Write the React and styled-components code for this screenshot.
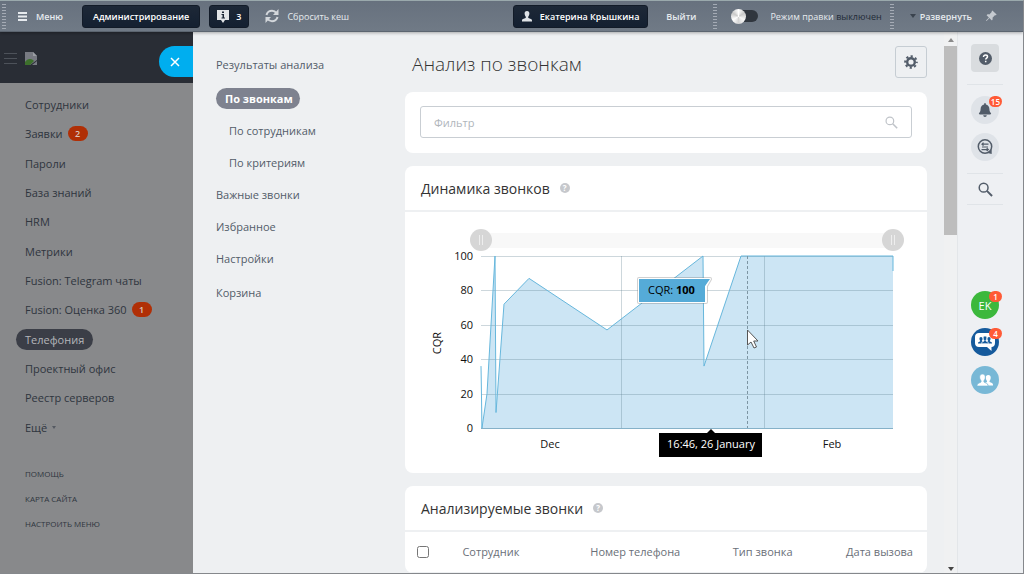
import React from 'react';
import styled, { createGlobalStyle, css } from 'styled-components';
import { FaBell } from 'react-icons/fa';
import { BsPinAngleFill } from 'react-icons/bs';

const GlobalStyle = createGlobalStyle`
  * {
    box-sizing: border-box;
  }
  body {
    margin: 0;
    background: #eef0f2;
    font-family: "Open Sans", "Noto Sans", sans-serif;
    font-size: 11px;
    color: #525c69;
  }
  button, input {
    font-family: inherit;
    margin: 0;
  }
  button {
    border: 0;
    padding: 0;
    background: none;
    color: inherit;
    cursor: pointer;
  }
  a {
    color: inherit;
    text-decoration: none;
  }
  ul {
    list-style: none;
    margin: 0;
    padding: 0;
  }
  svg {
    display: block;
    flex-shrink: 0;
  }
`;

const Page = styled.div`
  display: flex;
  flex-direction: column;
  height: 100vh;
  overflow: hidden;
  border: 1px solid #85888c;
  border-top-color: #9aa9ac;
  border-left: 0;
`;

/* top bar */

const TopBar = styled.header`
  display: flex;
  align-items: center;
  flex: none;
  height: 31px;
  padding-right: 26px;
  color: #e6eaee;
  background: linear-gradient(#67717e, #707a86);
  border-bottom: 1px solid #5c6570;
  box-shadow: 0 1px 3px rgba(0, 0, 0, 0.3);
  white-space: nowrap;
  z-index: 2;
`;

const Grip = styled.span`
  width: 4px;
  height: 26px;
  margin-left: ${(p) => p.$left || 0}px;
  background: radial-gradient(#a9b0b9 35%, transparent 40%) 0 0 / 2px 3px;
`;

const BarButton = styled.button`
  display: flex;
  align-items: center;
  gap: ${(p) => p.$gap || 8}px;
  margin-left: ${(p) => p.$left || 0}px;
  font-size: 9px;
  font-weight: ${(p) => (p.$plain ? 400 : 600)};
  ${(p) =>
    p.$dark &&
    css`
      height: 23px;
      padding: 0 ${p.$pad || 10}px;
      border-radius: 3px;
      color: #fff;
      background: linear-gradient(#1d2837, #142031);
      border: 1px solid #121b28;
    `}
`;

const Spacer = styled.span`
  flex: 1;
`;

const Toggle = styled.label`
  display: flex;
  align-items: center;
  gap: 12px;
  margin-left: 17px;
  font-size: 9px;
  b {
    font-weight: 400;
    color: #222b37;
  }
  input {
    display: flex;
    align-items: center;
    appearance: none;
    width: 24px;
    height: 12px;
    border-radius: 6px;
    background: #30363e;
  }
  input::before {
    content: "";
    flex: none;
    width: 15px;
    height: 15px;
    margin-left: -3px;
    border-radius: 50%;
    background: conic-gradient(#fff, #c9c9c9, #f8f8f8, #d5d5d5, #fff, #c9c9c9, #fff);
  }
`;

/* left menu */

const Body = styled.div`
  display: flex;
  flex: 1;
  min-height: 0;
`;

const LeftMenu = styled.nav`
  flex: none;
  width: 193px;
  background: #88898b;
  color: #2f353e;
`;

const LeftHead = styled.div`
  display: flex;
  align-items: center;
  gap: 7px;
  height: 51px;
  padding: 2px 0 0 4px;
  background: #292d35;
  color: #4d525a;
`;

const CloseButton = styled.button`
  display: flex;
  align-items: center;
  margin-left: auto;
  width: 34px;
  height: 31px;
  padding-left: 11px;
  margin-top: 6px;
  border-radius: 16px 0 0 16px;
  background: #00aeef;
  color: #fff;
`;

const LeftList = styled.ul`
  display: grid;
  grid-auto-rows: 1fr;
  align-items: center;
  justify-items: start;
  height: 352px;
  margin: 7px 0 25px 16px;
`;

const LeftLink = styled.a`
  display: flex;
  align-items: center;
  gap: 5px;
  height: 21px;
  padding: 0 9px;
  border-radius: 11px;
  ${(p) =>
    p.$active &&
    css`
      background: #3b3e47;
      color: #b4b6ba;
    `}
`;

const MenuCount = styled.span`
  min-width: 20px;
  height: 15px;
  border-radius: 8px;
  background: #b02f06;
  color: #d9c5be;
  font-size: 9px;
  font-weight: 600;
  line-height: 15px;
  text-align: center;
`;

const LeftFooter = styled.ul`
  display: grid;
  gap: 11px;
  padding-left: 25px;
  font-size: 8px;
  line-height: 14px;
  text-transform: uppercase;
`;

/* panel */

const Panel = styled.div`
  display: flex;
  flex: 1;
  min-width: 0;
  background: #eef0f2;
`;

const PanelNav = styled.ul`
  display: flex;
  flex-direction: column;
  align-items: flex-start;
  gap: 11px;
  flex: none;
  width: 212px;
  padding: 22px 0 0 23px;
`;

const PanelLink = styled.a`
  display: block;
  line-height: 21px;
  padding-left: ${(p) => (p.$nested ? 13 : 0)}px;
  margin-top: ${(p) => p.$top || 0}px;
  ${(p) =>
    p.$active &&
    css`
      padding: 0 7px 0 9px;
      border-radius: 11px;
      background: #7e828f;
      color: #fff;
      font-weight: 700;
    `}
`;

const Main = styled.main`
  flex: 1;
  min-width: 0;
  overflow: hidden;
  padding-right: 17px;
`;

const TitleRow = styled.div`
  display: flex;
  align-items: center;
  justify-content: space-between;
  height: 60px;
  padding-left: 7px;
`;

const Title = styled.h1`
  margin: 3px 0 0;
  font-size: 19px;
  font-weight: 300;
  color: #333;
`;

const GearButton = styled.button`
  display: grid;
  place-items: center;
  width: 32px;
  height: 32px;
  border: 1px solid #c6cdd3;
  border-radius: 3px;
  color: #525c69;
`;

const Card = styled.section`
  margin-bottom: 13px;
  border-radius: 8px;
  background: #fff;
  overflow: hidden;
`;

const FilterBox = styled.form`
  display: flex;
  align-items: center;
  height: 32px;
  margin: 14px 15px 15px;
  padding-right: 13px;
  border: 1px solid #c9ced3;
  border-radius: 3px;
  color: #c0c4c9;
  input {
    flex: 1;
    min-width: 0;
    padding: 1px 13px 0;
    border: 0;
    outline: 0;
    background: none;
    font-size: 11px;
  }
  input::placeholder {
    color: #b0b5bb;
  }
`;

const CardHead = styled.div`
  display: flex;
  align-items: center;
  gap: 10px;
  height: 46px;
  padding-left: 16px;
  border-bottom: 2px solid #eef0f2;
`;

const CardTitle = styled.h2`
  margin: 0;
  font-size: 14px;
  font-weight: 400;
  color: #333;
`;

const Hint = styled.button`
  width: 10px;
  height: 10px;
  border-radius: 50%;
  background: #c6c8cc;
  color: #fff;
  font-size: 8px;
  font-weight: 700;
  line-height: 10px;
`;

const Range = styled.div`
  display: grid;
  align-items: center;
  height: 22px;
  margin: 17px 23px 0 65px;
  background: linear-gradient(#f8f8f8, #f8f8f8) center / calc(100% - 22px) 15px no-repeat;
  input {
    grid-area: 1 / 1;
    appearance: none;
    width: 100%;
    height: 22px;
    background: none;
    pointer-events: none;
  }
  input::-webkit-slider-thumb {
    appearance: none;
    width: 22px;
    height: 22px;
    border-radius: 50%;
    pointer-events: auto;
    background:
      linear-gradient(#eee, #eee) 9px 6px / 1px 10px no-repeat,
      linear-gradient(#eee, #eee) 12px 6px / 1px 10px no-repeat,
      #d6d6d6;
  }
`;

const ChartSvg = styled.svg`
  width: 100%;
  height: auto;
  margin-top: -5px;
  font-size: 11px;
`;

const Table = styled.table`
  width: 100%;
  table-layout: fixed;
  border-collapse: collapse;
  th {
    height: 40px;
    padding: 0;
    border-bottom: 1px solid #eef0f2;
    font-size: 11px;
    font-weight: 400;
    text-align: left;
    color: #6a6f78;
    white-space: nowrap;
  }
  input {
    display: block;
    width: 12px;
    height: 12px;
    margin-left: 12px;
  }
`;

const Scrollbar = styled.div`
  display: flex;
  flex-direction: column;
  align-items: center;
  flex: none;
  width: 13px;
  background: #f0f1f2;
`;

const ScrollArrow = styled.span`
  margin: 6px 0 4px;
  border: 3px solid transparent;
  border-top-width: 0;
  border-bottom: 4px solid #8b8b8b;
  ${(p) =>
    p.$down &&
    css`
      margin: auto 0 2px;
      border-top: 4px solid #444;
      border-bottom-width: 0;
    `}
`;

const ScrollThumb = styled.span`
  width: 13px;
  height: 35%;
  background: #bdbdbd;
`;

/* right strip */

const Strip = styled.aside`
  display: flex;
  flex-direction: column;
  align-items: center;
  flex: none;
  width: 66px;
  padding: 12px 11px 0 0;
  border-left: 1px solid #e3e6e9;
  background: #eef0f3;
  color: #525c69;
`;

const StripButton = styled.button`
  position: relative;
  display: grid;
  place-items: center;
  flex: none;
  width: 28px;
  height: 28px;
  margin-bottom: ${(p) => p.$gap || 0}px;
  border-radius: ${(p) => (p.$square ? 4 : 14)}px;
  background: ${(p) => p.$bg || 'none'};
  color: ${(p) => p.$fg || 'inherit'};
  font-size: 11px;
`;

const StripBadge = styled.span`
  position: absolute;
  top: 0;
  right: -3px;
  min-width: 13px;
  height: 11px;
  padding: 0 2px;
  border-radius: 6px;
  background: #ff5a36;
  color: #fff;
  font-size: 8px;
  font-weight: 600;
  line-height: 11px;
`;

const Divider = styled.hr`
  flex: none;
  width: 36px;
  height: 1px;
  margin: ${(p) => p.$m};
  border: 0;
  background: #e0e4e8;
`;

const leftItems = [
  { name: 'Сотрудники' },
  { name: 'Заявки', count: 2 },
  { name: 'Пароли' },
  { name: 'База знаний' },
  { name: 'HRM' },
  { name: 'Метрики' },
  { name: 'Fusion: Telegram чаты' },
  { name: 'Fusion: Оценка 360', count: 1 },
  { name: 'Телефония', active: true },
  { name: 'Проектный офис' },
  { name: 'Реестр серверов' },
  { name: 'Ещё', more: true },
];

const panelItems = [
  { name: 'Результаты анализа' },
  { name: 'По звонкам', active: true, top: 2 },
  { name: 'По сотрудникам', nested: true },
  { name: 'По критериям', nested: true },
  { name: 'Важные звонки' },
  { name: 'Избранное' },
  { name: 'Настройки' },
  { name: 'Корзина', top: 2 },
];

const MenuLines = () => (
  <svg width="9" height="9" viewBox="0 0 9 9" stroke="currentColor" strokeWidth="2">
    <path d="M0 1H9M0 4.500H9M0 8H9" />
  </svg>
);

const ThinLines = () => (
  <svg width="13" height="11" viewBox="0 0 13 11" stroke="currentColor">
    <path d="M0 .5H13M0 5.500H13M0 10.500H13" />
  </svg>
);

const Magnifier = ({ size, sw = 2 }) => (
  <svg width={size} height={size} viewBox="0 0 16 16" fill="none" stroke="currentColor" strokeWidth={sw}>
    <circle cx="6" cy="6" r="4.700" />
    <path d="M9.500 9.500L15 15" strokeWidth={sw * 1.3} />
  </svg>
);

const BrokenImage = () => (
  <svg width="14" height="14" viewBox="0 0 14 14">
    <path d="M1 0h8l4 4v4L6 13H1z" fill="#777a82" />
    <path d="M9 0v4h4z" fill="#9a9da3" />
    <path d="M1 13v-3c2-3 5-4 8-2l1 1-4 4z" fill="#3d702c" />
    <path d="M13 9v4H8z" fill="#777a82" />
  </svg>
);

const Gear = () => (
  <svg width="14" height="14" viewBox="0 0 14 14" fill="none" stroke="currentColor">
    <circle cx="7" cy="7" r="3.800" strokeWidth="2.400" />
    <circle cx="7" cy="7" r="5.800" strokeWidth="2" strokeDasharray="2.2 2.355" strokeDashoffset="1.1" />
  </svg>
);

const Refresh = () => (
  <svg width="14" height="14" viewBox="0 0 14 14" fill="none" stroke="#d3d7db" strokeWidth="2">
    <path d="M1.500 6C2 3.500 4.500 1.700 7 1.700c2 0 3.500 1 4.500 2.500M12.500 8c-.5 2.500-3 4.300-5.500 4.300-2 0-3.500-1-4.500-2.500" />
    <path d="M13.500 0v6H8zM.5 14V8H6z" fill="#d3d7db" stroke="none" />
  </svg>
);

const User = () => (
  <svg width="10" height="11" viewBox="0 0 10 11" fill="#dfe3e7">
    <path d="M5 0c1.700 0 2.400 1.200 2.400 2.600S6.600 5.300 6.200 5.800v1c.5.700 3.800.8 3.800 2.700V10.500H0v-1C0 7.600 3.300 7.500 3.800 6.800v-1C3.400 5.300 2.600 4 2.600 2.600S3.300 0 5 0z" />
  </svg>
);

const InfoMark = () => (
  <svg width="12" height="13" viewBox="0 0 12 13">
    <path d="M0 0h12v10H8l-2 3-2-3H0z" fill="#e2e5e8" />
    <path d="M5 1.500h2v1.500H5zM4.500 4H7v3.500h1v1H4.500v-1h1V5h-1z" fill="#1b2635" />
  </svg>
);

const ChatMark = () => (
  <svg width="16" height="16" viewBox="0 0 16 16" fill="none" stroke="currentColor" strokeWidth="1.500">
    <circle cx="8" cy="7.500" r="6.700" />
    <path d="M14.700 10v5L10.500 14z" fill="currentColor" stroke="none" />
    <path d="M5 5.200h6.500M5 8h6M4.500 10.600H11M6.500 3.700L5 5.200l1.500 1.400M9.700 9.200l1.600 1.400-1.600 1.400" strokeWidth="1.200" />
  </svg>
);

const personPath =
  'M5 0c1.800 0 2.600 1.200 2.600 2.800S6.800 5.600 6.300 6.200v1C6.800 8 10 8.200 10 10.200V11H0v-.8C0 8.200 3.200 8 3.700 7.200v-1C3.200 5.600 2.400 4.400 2.400 2.800S3.200 0 5 0z';

const GroupChat = () => (
  <svg width="20" height="18" viewBox="0 0 20 18">
    <path d="M4 0h12c2.500 0 4 1.500 4 4v6c0 2.500-1.500 4-3.500 4v4L12 14H4c-2.500 0-4-1.500-4-4V4c0-2.500 1.500-4 4-4z" fill="#fff" />
    <g fill="#155a9c">
      <path d={personPath} transform="translate(3 4) scale(.6)" />
      <path d={personPath} transform="translate(11 4) scale(.6)" />
      <path d={personPath} transform="translate(6.500 3) scale(.7)" stroke="#fff" />
    </g>
  </svg>
);

const Pair = () => (
  <svg width="18" height="14" viewBox="-1 -1 18 14" fill="#fff">
    <path d={personPath} transform="translate(6.500 1) scale(.95)" />
    <path d={personPath} transform="scale(1.1)" stroke="#78b8d6" strokeWidth=".7" />
  </svg>
);

const yTicks = [100, 80, 60, 40, 20, 0];
const toY = (v) => 5 + (100 - v) * 1.72;
// x offset inside the plot, CQR value
const points = [
  [0, 36], [1, 0], [6, 20], [14, 100], [15, 9], [23, 72], [48, 87], [126, 57],
  [222, 100], [223, 36], [260, 100], [412, 100],
];

function CallsChart() {
  const line = points.map(([x, v]) => `${76 + x} ${toY(v)}`).join('L');
  return (
    <ChartSvg viewBox="0 -5 522 227" role="img" aria-label="CQR">
      <path d={`M${line}L488 177L76 177Z`} fill="#cce5f4" />
      <g stroke="#5b7a8c" strokeOpacity="0.3">
        {yTicks.map((t) => (
          <path key={t} d={`M76 ${Math.round(toY(t)) + 0.5}H488`} />
        ))}
        <path d="M216.500 5V177M359.500 5V177" />
      </g>
      <path d={`M${line}V20`} fill="none" stroke="#67b7dc" />
      <path d="M76 177.500H488" stroke="#85b1c8" />
      <path d="M342.500 5V177" stroke="#7d95a3" strokeDasharray="3 2" />
      <g fill="#111" textAnchor="end">
        {yTicks.map((t) => (
          <text key={t} x="68" y={toY(t) + 4}>{t}</text>
        ))}
      </g>
      <g fill="#111" textAnchor="middle">
        <text transform="translate(36 92) rotate(-90)">CQR</text>
        <text x="145" y="197">Dec</text>
        <text x="427" y="197">Feb</text>
      </g>
      <g fill="#55abd8" strokeLinejoin="round">
        <path d="M234 28H300L305 28L301 35V51H234Z" stroke="#777" strokeOpacity="0.35" strokeWidth="4" />
        <path d="M234 28H300L305 28L301 35V51H234Z" stroke="#fff" strokeWidth="2" />
        <path d="M234 28H305L300 35V51H234Z" />
      </g>
      <text x="243" y="43" fill="#000">CQR: <tspan fontWeight="700">100</tspan></text>
      <path d="M254 182H302L306 178L310 182H357V206H254Z" fill="#000" />
      <text x="306" y="197" fill="#fff" textAnchor="middle">16:46, 26 January</text>
      <path d="M342.500 79V94L346 91L349 97L351.500 96L348.700 90H353Z" fill="#fff" stroke="#555" />
    </ChartSvg>
  );
}

function Header() {
  return (
    <TopBar>
      <Grip $left={2} />
      <BarButton $left={12} $gap={9}><MenuLines />Меню</BarButton>
      <BarButton $dark $left={19}>Администрирование</BarButton>
      <BarButton $dark $left={9} $pad={7} $gap={7}><InfoMark />3</BarButton>
      <BarButton $plain $left={16}><Refresh />Сбросить кеш</BarButton>
      <Spacer />
      <BarButton $dark $pad={8} $gap={8}><User />Екатерина Крышкина</BarButton>
      <BarButton $left={18}>Выйти</BarButton>
      <Grip $left={17} />
      <Toggle><input type="checkbox" role="switch" /><span>Режим правки <b>выключен</b></span></Toggle>
      <Grip $left={8} />
      <BarButton $left={16} $gap={4}>
        <svg width="6" height="4" viewBox="0 0 6 4"><path d="M0 0h6L3 4z" fill="#3a434e" /></svg>
        Развернуть
      </BarButton>
      <BarButton $left={13} aria-label="Закрепить"><BsPinAngleFill size={12} color="#c5cad0" /></BarButton>
    </TopBar>
  );
}

export default function App() {
  return (
    <>
      <GlobalStyle />
      <Page>
        <Header />
        <Body>
          <LeftMenu>
            <LeftHead>
              <ThinLines />
              <BrokenImage />
              <CloseButton aria-label="Закрыть">
                <svg width="10" height="10" viewBox="0 0 10 10" stroke="#fff" strokeWidth="1.500"><path d="M1 1l8 8M9 1L1 9" /></svg>
              </CloseButton>
            </LeftHead>
            <LeftList>
              {leftItems.map((item) => (
                <li key={item.name}>
                  <LeftLink href="#" $active={item.active}>
                    {item.name}
                    {item.count && <MenuCount>{item.count}</MenuCount>}
                    {item.more && <svg width="4" height="3" viewBox="0 0 4 3"><path d="M0 0h4L2 3z" fill="#555a62" /></svg>}
                  </LeftLink>
                </li>
              ))}
            </LeftList>
            <LeftFooter>
              <li><a href="#">Помощь</a></li>
              <li><a href="#">Карта сайта</a></li>
              <li><a href="#">Настроить меню</a></li>
            </LeftFooter>
          </LeftMenu>
          <Panel>
            <PanelNav>
              {panelItems.map((item) => (
                <li key={item.name}>
                  <PanelLink href="#" $active={item.active} $nested={item.nested} $top={item.top}>{item.name}</PanelLink>
                </li>
              ))}
            </PanelNav>
            <Main>
              <TitleRow>
                <Title>Анализ по звонкам</Title>
                <GearButton aria-label="Настройки"><Gear /></GearButton>
              </TitleRow>
              <Card>
                <FilterBox>
                  <input type="text" placeholder="Фильтр" aria-label="Фильтр" />
                  <button type="button" aria-label="Найти"><Magnifier size={13} sw={1.5} /></button>
                </FilterBox>
              </Card>
              <Card>
                <CardHead>
                  <CardTitle>Динамика звонков</CardTitle>
                  <Hint>?</Hint>
                </CardHead>
                <Range>
                  <input type="range" defaultValue="0" aria-label="Начало периода" />
                  <input type="range" defaultValue="100" aria-label="Конец периода" />
                </Range>
                <CallsChart />
              </Card>
              <Card>
                <CardHead>
                  <CardTitle>Анализируемые звонки</CardTitle>
                  <Hint>?</Hint>
                </CardHead>
                <Table>
                  <colgroup>
                    <col style={{ width: '11%' }} />
                    <col style={{ width: '24.5%' }} />
                    <col style={{ width: '27.3%' }} />
                    <col style={{ width: '21.7%' }} />
                    <col />
                  </colgroup>
                  <thead>
                    <tr>
                      <th><input type="checkbox" aria-label="Выбрать все" /></th>
                      <th>Сотрудник</th>
                      <th>Номер телефона</th>
                      <th>Тип звонка</th>
                      <th>Дата вызова</th>
                    </tr>
                  </thead>
                </Table>
              </Card>
            </Main>
            <Scrollbar>
              <ScrollArrow />
              <ScrollThumb />
              <ScrollArrow $down />
            </Scrollbar>
          </Panel>
          <Strip>
            <StripButton $square $bg="#d9dcdf" aria-label="Помощь">
              <svg width="13" height="13" viewBox="0 0 13 13">
                <circle cx="6.500" cy="6.500" r="6.500" fill="#525c69" />
                <path d="M4.500 5c0-1.300.9-2 2-2s2 .7 2 1.700c0 1.300-1.800 1.400-1.800 2.800M6.700 8.700v1.500" fill="none" stroke="#fff" strokeWidth="1.500" />
              </svg>
            </StripButton>
            <Divider $m="12px 0 11px" />
            <StripButton $bg="#dfe3e8" $gap={9} aria-label="Уведомления"><FaBell size={14} /><StripBadge>15</StripBadge></StripButton>
            <StripButton $bg="#dfe3e8" aria-label="Сообщения"><ChatMark /></StripButton>
            <Divider $m="12px 0 1px" />
            <StripButton aria-label="Поиск"><Magnifier size={15} sw={1.6} /></StripButton>
            <Divider $m="1px 0 86px" />
            <StripButton $bg="#3cb83c" $fg="#fff" $gap={9}>EK<StripBadge>1</StripBadge></StripButton>
            <StripButton $bg="#155a9c" $gap={10} aria-label="Групповой чат"><GroupChat /><StripBadge>4</StripBadge></StripButton>
            <StripButton $bg="#78b8d6" $fg="#fff" aria-label="Коллеги"><Pair /></StripButton>
          </Strip>
        </Body>
      </Page>
    </>
  );
}
